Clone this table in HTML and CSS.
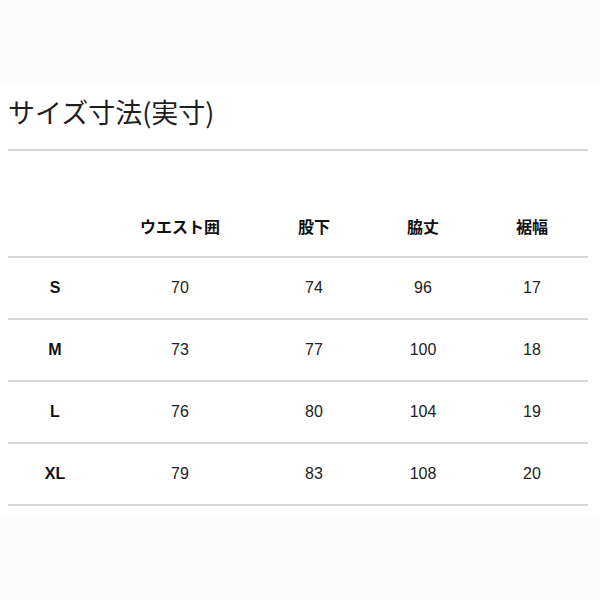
FILE: index.html
```html
<!DOCTYPE html>
<html lang="ja">
<head>
<meta charset="utf-8">
<title>サイズ寸法</title>
<link rel="stylesheet" href="styles.css">
</head>
<body>
<section class="sheet">
  <h1 class="title">サイズ寸法(実寸)</h1>
  <table class="size-table">
    <colgroup>
      <col class="c-size"><col class="c-waist"><col class="c-inseam"><col class="c-side"><col class="c-hem">
    </colgroup>
    <thead>
      <tr><th></th><th>ウエスト囲</th><th>股下</th><th>脇丈</th><th>裾幅</th></tr>
    </thead>
    <tbody>
      <tr><th>S</th><td>70</td><td>74</td><td>96</td><td>17</td></tr>
      <tr><th>M</th><td>73</td><td>77</td><td>100</td><td>18</td></tr>
      <tr><th>L</th><td>76</td><td>80</td><td>104</td><td>19</td></tr>
      <tr><th>XL</th><td>79</td><td>83</td><td>108</td><td>20</td></tr>
    </tbody>
  </table>
</section>
</body>
</html>
```

FILE: styles.css
```css
html, body {
  margin: 0;
  padding: 0;
  background: #fcfcfc;
}
body {
  width: 600px;
  height: 600px;
  overflow: hidden;
  font-family: "Liberation Sans", "Noto Sans CJK JP", sans-serif;
  color: #222;
}
.sheet {
  margin-top: 82px;
  background: #fff;
  padding: 12px 12px 12px 8px;
}
.title {
  margin: 0;
  font-family: "Noto Sans CJK JP", sans-serif;
  font-weight: 400;
  font-size: 27px;
  line-height: 36px;
  color: #1e1e1e;
  padding-bottom: 19px;
  border-bottom: 2px solid #d6d6d6;
}
.size-table {
  margin-top: 45px;
  width: 580px;
  border-collapse: collapse;
  table-layout: fixed;
}
.c-size { width: 94px; }
.c-waist { width: 156px; }
.c-inseam { width: 112px; }
.c-side { width: 106px; }
.c-hem { width: 112px; }
.size-table th,
.size-table td {
  height: 60px;
  padding: 0;
  text-align: center;
  vertical-align: middle;
  border-bottom: 2px solid #d6d6d6;
}
.size-table thead th {
  font-family: "Noto Sans CJK JP", sans-serif;
  font-weight: 700;
  font-size: 16px;
  color: #111;
}
.size-table tbody th {
  font-family: "Liberation Sans", sans-serif;
  font-weight: 700;
  font-size: 16px;
  color: #111;
}
.size-table td {
  font-size: 16px;
  color: #222;
}
```
